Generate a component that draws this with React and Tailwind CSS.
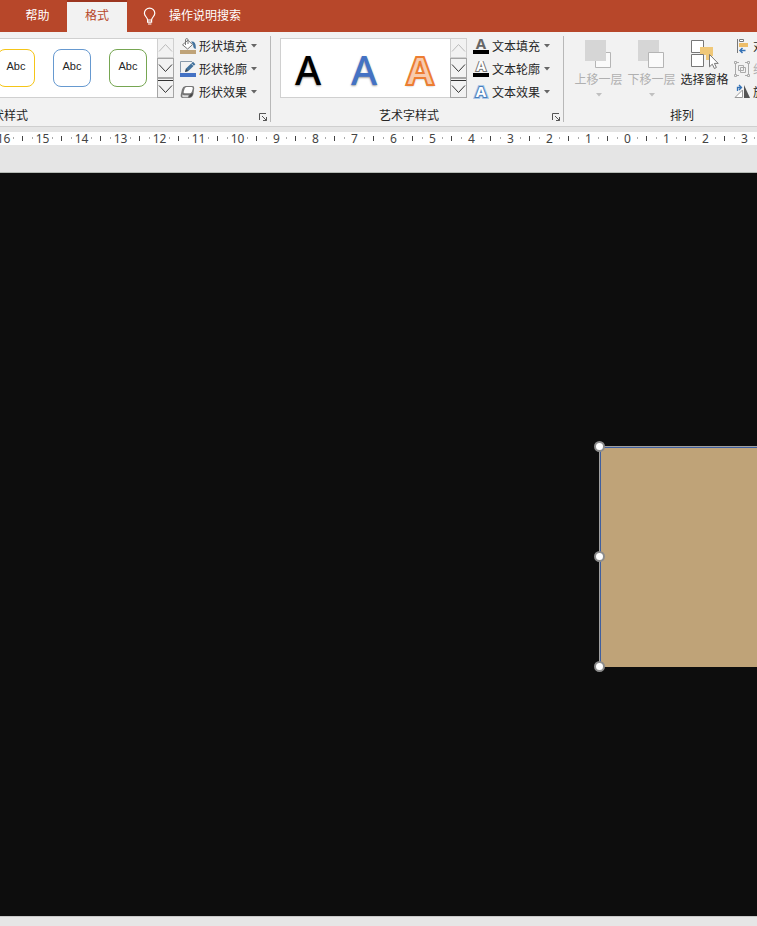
import React from 'react';

const shapeStyles = [
  { name: 'gold', className: 'border-[#f5c518]' },
  { name: 'blue', className: 'border-[#6699d0]' },
  { name: 'green', className: 'border-[#76a652]' }
];

const wordArtStyles = [
  { name: 'black', className: 'font-medium text-black' },
  { name: 'blue', className: 'font-medium text-[#4472c4]' },
  { name: 'orange', className: 'font-bold text-[#f8cbad] [-webkit-text-stroke:2px_#ed7d31]' }
];

const rulerMarks = [16, 15, 14, 13, 12, 11, 10, 9, 8, 7, 6, 5, 4, 3, 2, 1, 0, 1, 2, 3];

const Caret = ({ className = 'text-[#666]' }) => (
  <svg width="6" height="4" viewBox="0 0 6 4" className={`shrink-0 ${className}`}>
    <path d="M0 0h6L3 3.5z" fill="currentColor" />
  </svg>
);

const BulbIcon = () => (
  <svg width="14" height="18" viewBox="0 0 14 18" fill="none" stroke="#fff" strokeWidth="1.2">
    <path d="M4.6 13c0-2.4-3.2-3.8-3.2-6.8a5.2 5 0 0 1 10.4 0c0 3-3.2 4.4-3.2 6.8zM4.6 13v2.2h4V13M5 17h3.4" />
  </svg>
);

const FillIcon = () => (
  <svg width="16" height="16" viewBox="0 0 16 16" fill="none">
    <rect y="12" width="16" height="4" fill="#bfa378" />
    <path d="M2.5 6.8 8 2.2l4.500 4.500L7.600 11z" fill="#fff" stroke="#777" />
    <path d="M5.5 7V1.700C5.500.2 8 .2 8 1.700V6" stroke="#777" />
    <path d="M11 3.500c3.800-.5 5.200 2.200 4.700 7.500-2-.3-2.700-2-2.500-4.200z" fill="#41719c" />
  </svg>
);

const OutlineIcon = () => (
  <svg width="16" height="16" viewBox="0 0 16 16" fill="none">
    <path d="M12 .5H.5v11" stroke="#8899aa" />
    <rect y="12" width="16" height="4" fill="#4472c4" />
    <path d="m5 11 1-3.500L13 .8l2.400 2.400-7 6.800z" fill="#41719c" />
    <path d="m11.300 2.500 2.400 2.400" stroke="#f2f2f2" strokeWidth=".8" />
    <path d="m5 11 1-3.200 2.200 2.200z" fill="#444" />
  </svg>
);

const EffectIcon = () => (
  <svg width="16" height="16" viewBox="0 0 16 16">
    <path d="M5.500 2h6.800q2.200 0 1.900 2.200l-.7 5.500q-.5 3.600-3.800 4.300H3Q.3 14 .7 11L2 5.300q.8-3 3.500-3.300z" fill="#777" />
    <path d="M6.500 3h5q1.700 0 1.300 1.500l-1 3.200q-.5 1.600-2.200 1.600H4.900q-1.700 0-1.200-1.600l1-3.200Q5.200 3 6.500 3z" fill="#fff" />
    <path d="M2.200 10.500q.8.700 2 .7h4.500l-.8 2H3.500q-1.600 0-1.300-2.700z" fill="#ddd" />
    <path d="m9.700 11 3.200-2.300-.5 2.300q-.7 1.800-3.200 2.200z" fill="#444" />
  </svg>
);

const TextFillIcon = () => (
  <svg width="16" height="16" viewBox="0 0 16 16" className="font-['Noto_Sans']">
    <text x="8" y="11" textAnchor="middle" fontSize="15" fontWeight="700" fill="#666">A</text>
    <rect y="12" width="16" height="4" fill="#000" />
  </svg>
);

const TextOutlineIcon = () => (
  <svg width="16" height="16" viewBox="0 0 16 16" className="font-['Noto_Sans']">
    <text x="8" y="10" textAnchor="middle" fontSize="14" fontWeight="700" fill="#fff" stroke="#777" strokeWidth="2" paintOrder="stroke">A</text>
    <rect y="12" width="16" height="4" fill="#000" />
  </svg>
);

const TextEffectIcon = () => (
  <svg width="16" height="16" viewBox="0 0 16 16" className="font-['Noto_Sans']">
    <text x="8" y="13" textAnchor="middle" fontSize="15" fontWeight="700" fill="#fff" stroke="#a9c8ea" strokeWidth="4" paintOrder="stroke">A</text>
    <text x="8" y="13" textAnchor="middle" fontSize="15" fontWeight="700" fill="#fff" stroke="#4a7ebb" strokeWidth="2" paintOrder="stroke">A</text>
  </svg>
);

const ForwardIcon = () => (
  <svg width="28" height="30" viewBox="0 0 28 30" fill="none">
    <path d="M10.5 12.5h15v15h-15z" fill="#fafafa" stroke="#b5b5b5" />
    <path d="M0 0h21v21H0z" fill="#d6d6d6" />
  </svg>
);

const BackwardIcon = () => (
  <svg width="28" height="30" viewBox="0 0 28 30" fill="none">
    <path d="M0 0h21v21H0z" fill="#d6d6d6" />
    <path d="M10.5 12.5h15v15h-15z" fill="#fafafa" stroke="#b5b5b5" />
  </svg>
);

const SelectionIcon = () => (
  <svg width="28" height="30" viewBox="0 0 28 30" fill="none">
    <path d="M9 7h13v9h-4v4h-3v-5H9z" fill="#f0c878" />
    <path d="M.5.5h12v6.500H9v5.500H.5zM.5 14.500h12v12H.5z" fill="#fff" />
    <path d="M12.500 7V.5H.5v12H9M.5 14.500h12v12H.5z" stroke="#777" />
    <path d="M18.500 14.500v12.300l2.800-2.600 2.100 4.300 2-1-2-4.100h3.800z" fill="#fff" stroke="#777" />
  </svg>
);

const AlignIcon = () => (
  <svg width="16" height="16" viewBox="0 0 16 16" fill="none">
    <path d="M3.500 1v14" stroke="#777" />
    <path d="M5.500 1.500h4v2h-4z" fill="#fff" stroke="#777" />
    <path d="M5 5h9v4H5z" fill="#edbd68" />
    <path d="M11.500 12.500H6M8.500 10 6 12.500 8.500 15" stroke="#3471b5" strokeWidth="1.500" />
  </svg>
);

const GroupIcon = () => (
  <svg width="16" height="16" viewBox="0 0 16 16" fill="none" stroke="#aaa">
    <path d="M1.500 3v10M14.500 3v10M3 1.500h2M11 1.500h2M3 14.500h2M11 14.500h2" />
    <path d="M4.500 4.500h5v5h-5zM6.500 6.500h5v5h-5z" />
    <path d="M.5.5h2v2h-2zM13.500.5h2v2h-2zM.5 13.500h2v2h-2zM13.500 13.500h2v2h-2z" fill="#f2f2f2" />
  </svg>
);

const RotateIcon = () => (
  <svg width="16" height="16" viewBox="0 0 16 16" fill="none">
    <path d="M8.500 6v7.500H1z" fill="#fff" stroke="#999" />
    <path d="M10 1v13h6z" fill="#555" />
    <path d="M3.500 7V3.500H7M5 1l2.500 2.500L5 6" stroke="#3471b5" strokeWidth="1.300" />
  </svg>
);

const GalleryButton = ({ label, path, className = 'border-[#a5a5a5] text-[#333]' }) => (
  <button type="button" aria-label={label} className={`flex h-5 w-[17px] items-center justify-center border ${className}`}>
    <svg width="15" height="18" viewBox="0 0 15 18" fill="none" stroke="currentColor" className="shrink-0">
      <path d={path} />
    </svg>
  </button>
);

const Gallery = ({ className = '', children }) => (
  <div className="flex h-[60px] shrink-0">
    <div className={`flex items-center border border-r-0 border-[#d0d0d0] bg-white ${className}`}>{children}</div>
    <div className="flex flex-col">
      <GalleryButton label="上一行" path="M1 12.500l6.500-7 6.500 7" className="border-[#d0d0d0] text-[#bbb]" />
      <GalleryButton label="下一行" path="M1 5.500l6.500 7 6.500-7" />
      <GalleryButton label="其他" path="M0 1.500h15M1 6.500l6.500 7 6.500-7" />
    </div>
  </div>
);

const MenuButton = ({ icon, label, className = '' }) => (
  <button type="button" className={`flex h-[23px] items-center whitespace-nowrap ${className}`}>
    {icon}
    <span className="ml-[3px]">{label}</span>
    <Caret className="ml-1 text-[#666]" />
  </button>
);

const LargeButton = ({ icon, label, disabled = false }) => (
  <button
    type="button"
    disabled={disabled}
    className="flex w-[53px] flex-col items-center whitespace-nowrap text-[#262626] disabled:text-[#b0b0b0]"
  >
    {icon}
    <span className="mt-px leading-4">{label}</span>
    {disabled && <Caret className="mt-1.5 text-[#c0c0c0]" />}
  </button>
);

const GroupLabel = ({ label, launcher = false }) => (
  <div className="flex h-4 items-center">
    <span className="flex-1 pt-0.5 text-center leading-4">{label}</span>
    {launcher && (
      <button type="button" aria-label={`${label}设置`} className="mr-0.5 flex w-3.5 justify-end">
        <svg width="9" height="9" viewBox="0 0 9 9" fill="none" stroke="#555" className="mt-1.5">
          <path d="M.5 7V.5H7M3 3l4.500 4.500M7.500 4v3.500H4" />
        </svg>
      </button>
    )}
  </div>
);

const Header = () => (
  <header className="flex h-8 shrink-0 bg-[#b7472a] text-white">
    <nav className="flex">
      <button type="button" className="ml-2 w-[59px] pb-0.5">帮助</button>
      <button type="button" className="w-[60px] border-t-2 border-[#9c3620] bg-[#f2f2f2] pb-1 text-[#b7472a]">格式</button>
    </nav>
    <button type="button" className="ml-4 flex items-center gap-3">
      <BulbIcon />
      <span className="pb-0.5">操作说明搜索</span>
    </button>
  </header>
);

const Ribbon = () => (
  <div className="flex h-[95px] shrink-0 overflow-hidden border-b border-[#cfcfcf] bg-[#f2f2f2] pt-1 pb-1">
    <section className="-ml-[246px] flex w-[517px] shrink-0 flex-col border-r border-[#b8b8b8]">
      <div className="mt-0.5 flex h-[68px] shrink-0 justify-end">
        <Gallery className="gap-[18px] pr-2.5">
          {shapeStyles.map((style) => (
            <button
              key={style.name}
              type="button"
              className={`h-[38px] w-[38px] rounded-lg border bg-white pb-1 font-['Liberation_Sans',sans-serif] text-[11px] ${style.className}`}
            >
              Abc
            </button>
          ))}
        </Gallery>
        <div className="-mt-1 mr-[13px] ml-1.5 flex shrink-0 flex-col">
          <MenuButton icon={<FillIcon />} label="形状填充" />
          <MenuButton icon={<OutlineIcon />} label="形状轮廓" />
          <MenuButton icon={<EffectIcon />} label="形状效果" />
        </div>
      </div>
      <GroupLabel label="形状样式" launcher />
    </section>

    <section className="flex w-[293px] shrink-0 flex-col border-r border-[#b8b8b8]">
      <div className="mt-0.5 flex h-[68px] shrink-0 pl-[9px]">
        <Gallery className="w-[170px]">
          {wordArtStyles.map((style) => (
            <button
              key={style.name}
              type="button"
              className={`h-full w-14 pt-1 pr-0.5 font-['Noto_Sans',sans-serif] text-[40px] leading-10 [text-shadow:0_1px_2px_#0006] ${style.className}`}
            >
              A
            </button>
          ))}
        </Gallery>
        <div className="-mt-1 ml-1.5 flex shrink-0 flex-col">
          <MenuButton icon={<TextFillIcon />} label="文本填充" />
          <MenuButton icon={<TextOutlineIcon />} label="文本轮廓" />
          <MenuButton icon={<TextEffectIcon />} label="文本效果" />
        </div>
      </div>
      <GroupLabel label="艺术字样式" launcher />
    </section>

    <section className="flex w-[236px] shrink-0 flex-col">
      <div className="mt-0.5 flex h-[68px] shrink-0 pl-2">
        <div className="flex items-start pt-0.5">
          <LargeButton icon={<ForwardIcon />} label="上移一层" disabled />
          <LargeButton icon={<BackwardIcon />} label="下移一层" disabled />
          <LargeButton icon={<SelectionIcon />} label="选择窗格" />
        </div>
        <div className="-mt-1 ml-[3px] flex shrink-0 flex-col">
          <MenuButton icon={<AlignIcon />} label="对齐" />
          <MenuButton icon={<GroupIcon />} label="组合" className="text-[#b0b0b0]" />
          <MenuButton icon={<RotateIcon />} label="旋转" />
        </div>
      </div>
      <GroupLabel label="排列" />
    </section>
  </div>
);

const Ruler = () => (
  <div className="shrink-0 overflow-hidden bg-[#e5e5e5] pt-[5px] pb-[27px]">
    <div className="-ml-4 flex h-[13px] bg-white font-['Noto_Sans',sans-serif] text-[#444]">
      {rulerMarks.map((mark, index) => (
        <div key={index} className="flex h-3 w-[39px] shrink-0 items-center pl-[9px] leading-[11px]">
          <span className="h-0.5 w-px bg-[#aaa]" />
          <span className="w-[19px] text-center">{mark}</span>
          <span className="h-0.5 w-px bg-[#aaa]" />
          <span className="ml-2 h-[5px] w-px bg-[#444]" />
        </div>
      ))}
    </div>
  </div>
);

const Handle = () => <span className="h-[11px] w-[11px] rounded-full border-2 border-[#8c8c8c] bg-white" />;

const Slide = () => (
  <main className="relative min-h-0 flex-1 overflow-hidden border-t border-[#b5bab5] bg-[#0d0d0d]">
    <div className="absolute top-[273px] right-0 left-[599px] h-[221px] border-t border-l border-[#a0a0a0] bg-[#bfa378]">
      <div className="h-full border-t border-l border-[#3f5f9f]" />
      <div className="absolute -top-1.5 -bottom-[5px] -left-1.5 flex flex-col justify-between">
        <Handle />
        <Handle />
        <Handle />
      </div>
    </div>
  </main>
);

const App = () => {
  return (
    <div className="flex h-screen flex-col overflow-hidden font-['Noto_Sans_CJK_SC',sans-serif] text-xs text-[#262626]">
      <Header />
      <Ribbon />
      <Ruler />
      <Slide />
      <footer className="h-2.5 shrink-0 border-t border-[#c8c8c8] bg-[#e6e6e6]" />
    </div>
  );
};

export default App;
